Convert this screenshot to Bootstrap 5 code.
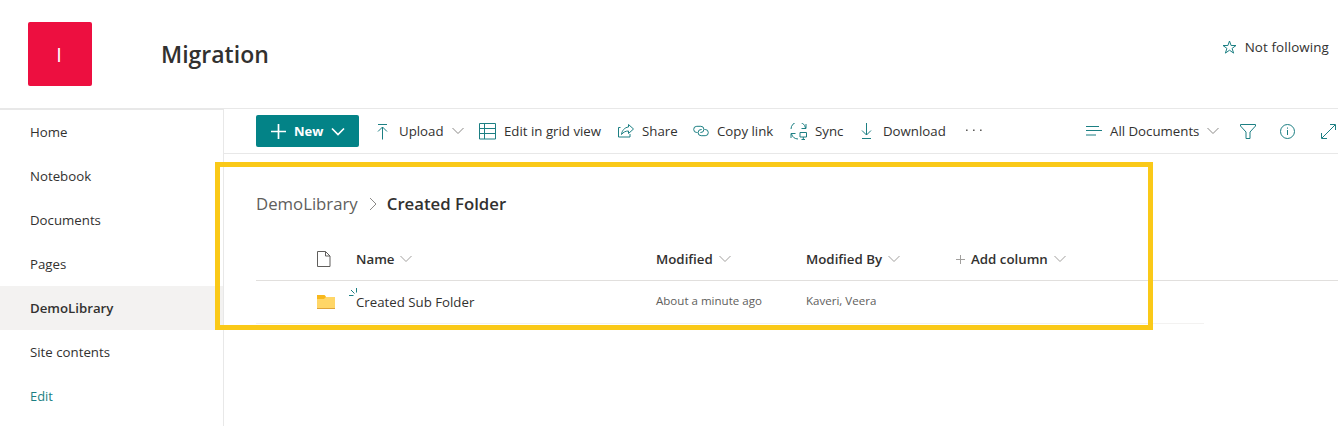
<!DOCTYPE html>
<html lang="en">
<head>
<meta charset="utf-8">
<meta name="viewport" content="width=device-width, initial-scale=1">
<title>Migration</title>
<link href="https://cdn.jsdelivr.net/npm/bootstrap@5.3.0/dist/css/bootstrap.min.css" rel="stylesheet">
<style>
  body { font-family: "Open Sans", "Noto Sans", sans-serif; font-size: 13.25px; line-height: 20px; color: #323130; background: #fff; height: 426px; overflow: hidden; }
  svg { fill: none; stroke: #1c7f83; stroke-width: 1; flex: none; display: block; }
  a { color: inherit; text-decoration: none; }
  .site-header { height: 109px; border-bottom: 1px solid #e8e8e8; padding: 0 9px 0 28px; }
  .site-logo { width: 64px; height: 64px; background: #ed0f40; border-radius: 2px; color: #fff; font-size: 20px; padding: 2px 2px 0 0; }
  .site-title { font-size: 23px; font-weight: 600; line-height: 30px; margin-left: 69px; }
  .follow { margin-bottom: 14px; font-size: 13.4px; letter-spacing: .1px; }
  .side { width: 224px; height: 317px; border-right: 1px solid #e8e8e8; border-top: 1px solid #e8e8e8; flex: none; }
  .side .nav-link { height: 44px; padding: 12px 0 0 30px; color: #323130; }
  .side .nav-link.active { background: #f3f2f1; font-weight: 600; }
  .side .nav-link.edit { color: #1c7f83; font-size: 12.900px; }
  .cmdbar { height: 45px; border-bottom: 1px solid #e8e8e8; padding-left: 32px; display: grid; grid-template-columns: 119px 104px 139px 75px 97px 70px 105px 1fr 154px 40px 41px 17px; align-items: center; }
  .cmd { display: flex; align-items: center; white-space: nowrap; }
  .cmd > svg:first-child { margin-right: 8px; }
  .chev { stroke: #8a8886; margin-left: 8px; }
  .new-btn { width: 103px; height: 32px; background: #038387; border-radius: 2px; color: #fff; font-weight: 700; padding: 0 0 0 15px; font-size: 13px; }
  .new-btn svg { stroke: #fff; stroke-width: 1.7; }
  .crumbs { padding: 38px 0 0 32px; font-size: 16.750px; line-height: 24px; height: 84px; }
  .crumbs a { color: #605e5c; }
  .crumbs svg { margin: 5px 10px 0 11px; stroke: #8a8886; }
  .list { display: grid; grid-template-columns: 60px 40px 300px 150px 150px 1fr; align-items: center; margin-left: 32px; white-space: nowrap; }
  .list > svg { margin-left: 1px; }
  .list-head { height: 43px; border-bottom: 1px solid #e1dfdd; font-weight: 600; }
  .list-head .cmd { font-size: 13.300px; }
  .list-head .cmd > svg:first-child { margin-right: 6px; }
  .list-row { height: 43px; width: 948px; border-bottom: 1px solid #f3f2f1; }
  .list-head .chev { margin-left: 6px; stroke: #a19f9d; }
  .meta { font-size: 11.550px; color: #605e5c; padding-bottom: 2px; }
  .spark { position: absolute; left: -7px; top: -4px; }
  .frame { position: absolute; left: 215px; top: 162px; width: 938px; height: 168px; border: 5px solid #fac918; pointer-events: none; }
</style>
</head>
<body class="position-relative">
<header class="site-header d-flex align-items-center">
  <div class="site-logo d-flex align-items-center justify-content-center">I</div>
  <div class="site-title">Migration</div>
  <a href="#" class="cmd ms-auto follow"><svg width="15" height="14" viewBox="0 0 15 14"><path d="M7.500 1l1.600 4.500H14l-3.900 2.900 1.500 4.700-4.100-2.900-4.100 2.900 1.500-4.700L1 5.500h4.900z"/></svg><span>Not following</span></a>
</header>
<div class="d-flex">
  <nav class="side nav flex-column flex-nowrap">
    <a class="nav-link" href="#"><span>Home</span></a>
    <a class="nav-link" href="#"><span>Notebook</span></a>
    <a class="nav-link" href="#"><span>Documents</span></a>
    <a class="nav-link" href="#"><span>Pages</span></a>
    <a class="nav-link active" href="#"><span>DemoLibrary</span></a>
    <a class="nav-link" href="#"><span>Site contents</span></a>
    <a class="nav-link edit" href="#"><span>Edit</span></a>
  </nav>
  <main class="flex-grow-1">
    <div class="cmdbar">
      <div class="cmd new-btn"><svg width="15" height="15" viewBox="0 0 15 15"><path d="M7.500 0v15M0 7.500h15"/></svg><span>New</span><svg class="chev" width="14" height="9" viewBox="0 0 14 9"><path d="M1 1.500l6 6 6-6"/></svg></div>
      <div class="cmd"><svg width="16" height="17" viewBox="0 0 16 17"><path d="M3 1.500h9M7.500 4v12.500M3 8.500L7.500 4 12 8.500"/></svg><span>Upload</span><svg class="chev" width="12" height="8" viewBox="0 0 12 8"><path d="M.5 1L6 6.500 11.500 1"/></svg></div>
      <div class="cmd"><svg width="17" height="17" viewBox="0 0 17 17"><path d="M.5.500h16v15.500H.5zM5.500.500V16M.5 5.500h16M.5 10.500h16"/></svg><span>Edit in grid view</span></div>
      <div class="cmd"><svg width="16" height="16" viewBox="0 0 16 16"><path d="M2.500 4.500H.5V14h11.500v-3M10.500 1.500l5 4.500-5 4.500V8C7.500 8 5.500 9 3.500 11.500 4 7.500 6.500 4.500 10.500 4z"/></svg><span>Share</span></div>
      <div class="cmd"><svg width="16" height="14" viewBox="0 0 16 14"><path d="M4.500 8.500H3.800a3.100 3.100 0 010-6.200h4a3.100 3.100 0 010 6.200H7.300M11.500 5.500h.7a3.100 3.100 0 010 6.200h-4a3.100 3.100 0 010-6.200h.6"/></svg><span>Copy link</span></div>
      <div class="cmd"><svg width="17" height="17" viewBox="0 0 17 17"><path d="M1 6A7.300 7.300 0 0115.500 5M16 1v4.500h-4.500M1 15v-4.500h4.500M1.500 11a7.200 7.200 0 006.500 5M10 9.500h6.500v4.500H10zM13.300 14v2.500M11.500 16.500h3.500"/></svg><span>Sync</span></div>
      <div class="cmd"><svg width="15" height="17" viewBox="0 0 15 17"><path d="M6.500 0v12M2 7.500l4.500 4.500L11 7.500M2 15.500h9"/></svg><span>Download</span></div>
      <div class="cmd"><svg width="18" height="4" viewBox="0 0 18 4"><path fill="#605e5c" stroke="none" d="M1 .5h1.600v1.600H1zM8 .5h1.600v1.600H8zM15 .5h1.600v1.600H15z"/></svg></div>
      <div class="cmd"><svg width="16" height="12" viewBox="0 0 16 12"><path stroke-width="1.200" d="M0 1.500h13M0 5.500h16M0 10h10"/></svg><span>All Documents</span><svg class="chev" width="12" height="8" viewBox="0 0 12 8"><path d="M.5 1L6 6.500 11.500 1"/></svg></div>
      <div class="cmd"><svg width="16" height="15" viewBox="0 0 16 15"><path d="M.5.500h15v1.500L10 8v6.500H6V8L.5 2z"/></svg></div>
      <div class="cmd"><svg width="15" height="15" viewBox="0 0 15 15"><circle cx="7.500" cy="7.500" r="7"/><path d="M7.500 6v5M7.500 3.500v1.200"/></svg></div>
      <div class="cmd"><svg width="15" height="15" viewBox="0 0 15 15"><path d="M1 14L14 1M9 .5h5.500V6M.5 9v5.500H6"/></svg></div>
    </div>
    <div class="crumbs d-flex"><a href="#">DemoLibrary</a><svg width="8" height="14" viewBox="0 0 8 14"><path d="M1 1l6 6-6 6"/></svg><span class="fw-semibold">Created Folder</span></div>
    <div class="list list-head">
      <span></span>
      <svg width="14" height="16" viewBox="0 0 14 16"><path stroke="#605e5c" d="M.5.500h8l4.500 4.500v10.500H.5zM8.500.500V5H13"/></svg>
      <div class="cmd"><span>Name</span><svg class="chev" width="12" height="8" viewBox="0 0 12 8"><path d="M.5 1L6 6.500 11.500 1"/></svg></div>
      <div class="cmd"><span>Modified</span><svg class="chev" width="12" height="8" viewBox="0 0 12 8"><path d="M.5 1L6 6.500 11.500 1"/></svg></div>
      <div class="cmd"><span>Modified By</span><svg class="chev" width="12" height="8" viewBox="0 0 12 8"><path d="M.5 1L6 6.500 11.500 1"/></svg></div>
      <div class="cmd"><svg width="9" height="9" viewBox="0 0 9 9"><path stroke="#a19f9d" d="M4.500 0v9M0 4.500h9"/></svg><span>Add column</span><svg class="chev" width="12" height="8" viewBox="0 0 12 8"><path d="M.5 1L6 6.500 11.500 1"/></svg></div>
    </div>
    <div class="list list-row">
      <span></span>
      <svg width="18" height="14" viewBox="0 0 18 14"><g stroke="none"><path fill="#f8b81c" d="M0 0h7.500l1.500 1.500V5H0z"/><path fill="#ffd667" d="M0 4h7l2-2h9v12H0z"/><path fill="#dfa43a" d="M0 13h18v1H0z"/></g></svg>
      <div class="position-relative"><svg class="spark" width="9" height="9" viewBox="0 0 9 9"><path d="M7.500 0v4.500M2 2l3.500 3.500M0 7.500h4.500"/></svg><span>Created Sub Folder</span></div>
      <div class="meta"><span>About a minute ago</span></div>
      <div class="meta"><span>Kaveri, Veera</span></div>
      <span></span>
    </div>
  </main>
</div>
<div class="frame"></div>
<script src="https://cdn.jsdelivr.net/npm/bootstrap@5.3.0/dist/js/bootstrap.bundle.min.js"></script>
</body>
</html>
